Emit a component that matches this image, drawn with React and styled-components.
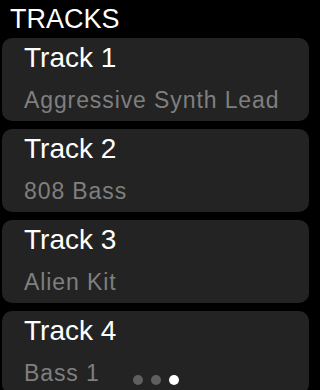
import styled, {createGlobalStyle} from 'styled-components'

const tracks = [
  {id: 1, name: 'Track 1', instrument: 'Aggressive Synth Lead'},
  {id: 2, name: 'Track 2', instrument: '808 Bass'},
  {id: 3, name: 'Track 3', instrument: 'Alien Kit'},
  {id: 4, name: 'Track 4', instrument: 'Bass 1'},
]

const GlobalStyle = createGlobalStyle`
  html, body {
    margin: 0;
    background: #000;
    overflow: hidden;
  }
  body {
    font-family: "Liberation Sans", Arial, sans-serif;
    -webkit-font-smoothing: antialiased;
  }
`

export default function App() {
  return (
    <>
      <GlobalStyle/>
      <Screen>
        <Header>TRACKS</Header>
        <List>
          {tracks.map(t => (
            <Card key={t.id}>
              <Name>{t.name}</Name>
              <Instrument>{t.instrument}</Instrument>
            </Card>
          ))}
        </List>
        <Pager>
          <Dot/>
          <Dot/>
          <Dot active/>
        </Pager>
      </Screen>
    </>
  )
}

const Screen = styled.div`
  position: relative;
  width: 312px;
  height: 390px;
  overflow: hidden;
  background: #000;
`

const Header = styled.div`
  color: #fff;
  font-size: 27px;
  line-height: 32px;
  padding: 3px 0 3px 10px;
`

const List = styled.div`
  display: flex;
  flex-direction: column;
  gap: 8px;
  padding: 0 3px 0 2px;
`

const Card = styled.div`
  background: #232323;
  border-radius: 10px;
  padding: 3px 0 7px 22px;
  height: 83px;
  box-sizing: border-box;
`

const Name = styled.div`
  color: #fff;
  font-size: 28px;
  line-height: 34px;
`

const Instrument = styled.div`
  color: #7f7f7f;
  font-size: 23px;
  line-height: 28px;
  margin-top: 11px;
  letter-spacing: 0.9px;
  white-space: nowrap;
`

const Pager = styled.div`
  position: absolute;
  left: 0;
  right: 0;
  bottom: 5px;
  display: flex;
  justify-content: center;
  gap: 8px;
`

const Dot = styled.span`
  width: 10px;
  height: 10px;
  border-radius: 50%;
  background: ${p => p.active ? '#fff' : '#5f5f5f'};
`
